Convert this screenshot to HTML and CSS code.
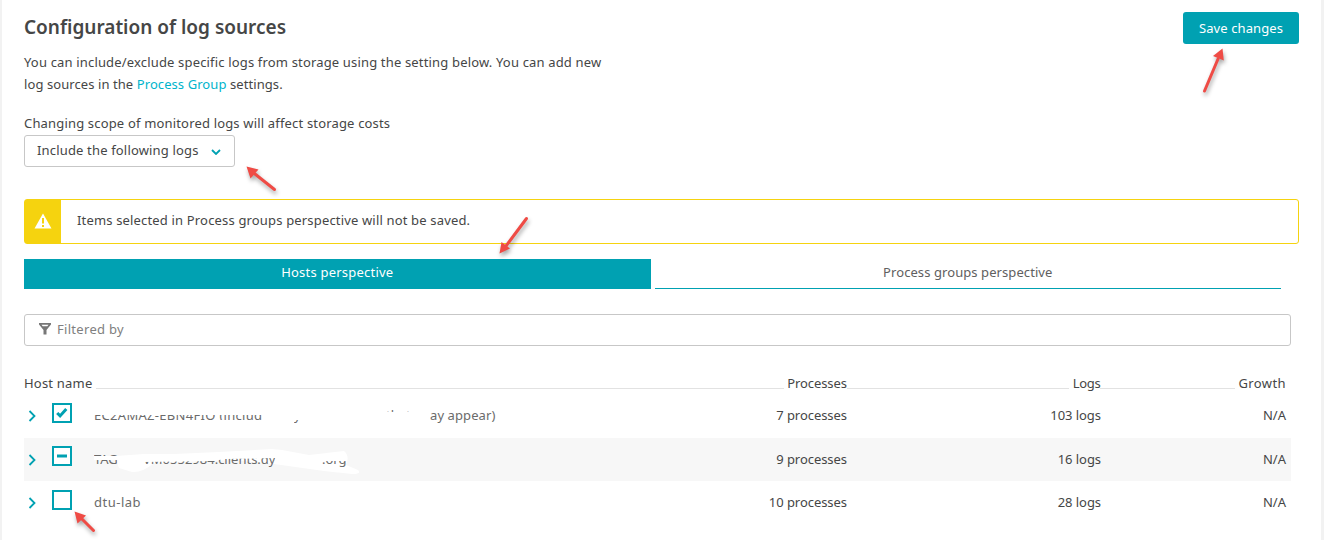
FILE: index.html
```html
<!DOCTYPE html>
<html lang="en">
<head>
<meta charset="utf-8">
<title>Configuration of log sources</title>
<link rel="stylesheet" href="styles.css">
</head>
<body>
<main class="page">
  <header class="header">
    <h1 class="title"><span class="t-title">Configuration of log sources</span></h1>
    <button class="save"><span class="t-save">Save changes</span></button>
  </header>
  <p class="intro"><span class="t-intro1">You can include/exclude specific logs from storage using the setting below. You can add new</span><br><span class="t-intro2">log sources in the <a class="link">Process Group</a> settings.</span></p>
  <label class="scope"><span class="t-scope">Changing scope of monitored logs will affect storage costs</span></label>
  <div class="select"><span class="t-select">Include the following logs</span>
    <svg class="caret" width="10" height="6" viewBox="0 0 10 6"><path d="M1 1l4 4 4-4"/></svg>
  </div>
  <div class="alert">
    <div class="alert-icon"><svg width="18" height="16" viewBox="0 0 18 16"><path fill="#fff" d="M9 .5 17.500 15.500H.5z"/><path fill="#f5d30f" d="M8 5h2v5.500H8zM8 12h2v2H8z"/></svg></div>
    <div class="alert-text"><span class="t-alert">Items selected in Process groups perspective will not be saved.</span></div>
  </div>
  <nav class="tabs">
    <div class="tab active"><span class="t-hosts">Hosts perspective</span></div>
    <div class="tab"><span class="t-groups">Process groups perspective</span></div>
  </nav>
  <div class="filter">
    <svg width="12" height="12" viewBox="0 0 12 12"><path fill="#777" fill-rule="evenodd" d="M0 0h12v1.500L7.500 7v4.500H4.500V7L0 1.500zM2.500 1.800l1.200 1.500h4.600l1.200-1.500z"/></svg>
    <span class="t-filter">Filtered by</span>
  </div>
  <section class="table">
    <div class="thead">
      <span class="t-hostname">Host name</span><i class="rule rule-host"></i>
      <span class="t-proc">Processes</span><i class="rule rule-proc"></i>
      <span class="t-logs">Logs</span><i class="rule rule-logs"></i>
      <span class="t-growth">Growth</span>
    </div>
    <div class="row">
      <svg class="chev" width="8" height="12" viewBox="0 0 8 12"><path d="M1.500 1 6.500 6l-5 5"/></svg>
      <div class="box"><svg width="16" height="16" viewBox="0 0 16 16"><path class="tick" d="M3.200 8l2.900 2.900L12.300 4"/></svg></div>
      <div class="name"><span class="frag f1">EC2AMAZ-EBN4FIO (includ</span><span class="frag f2">y</span><span class="frag f3">that</span><span class="frag f5">ay appear)</span></div>
      <div class="c-proc"><span>7 processes</span></div><div class="c-logs"><span>103 logs</span></div><div class="c-growth"><span>N/A</span></div>
    </div>
    <div class="row striped">
      <svg class="chev" width="8" height="12" viewBox="0 0 8 12"><path d="M1.500 1 6.500 6l-5 5"/></svg>
      <div class="box"><svg width="16" height="16" viewBox="0 0 16 16"><path class="dash" d="M3 8h10"/></svg></div>
      <div class="name">
        <svg class="smudge" width="268" height="40" viewBox="0 0 268 40"><path fill="#fff" d="M0 18H22L50 16 80 16Q130 14 178 11L188 12 215 17 250 13Q256 18 252 27L264 32Q268 36 258 36L230 33 180 26 140 22 60 25Q48 35 38 34L25 30 22 22 0 22z"/></svg>
        <span class="frag g1">TAG</span><span class="frag g2">VM0552984.clients.dy</span><span class="frag g3">.org</span></div>
      <div class="c-proc"><span>9 processes</span></div><div class="c-logs"><span>16 logs</span></div><div class="c-growth"><span>N/A</span></div>
    </div>
    <div class="row">
      <svg class="chev" width="8" height="12" viewBox="0 0 8 12"><path d="M1.500 1 6.500 6l-5 5"/></svg>
      <div class="box"></div>
      <div class="name"><span class="t-lab">dtu-lab</span></div>
      <div class="c-proc"><span>10 processes</span></div><div class="c-logs"><span>28 logs</span></div><div class="c-growth"><span>N/A</span></div>
    </div>
  </section>
</main>
<svg class="arrows" width="1324" height="540" viewBox="0 0 1324 540">
  <g><path d="M1204.500 91 1218 59"/><polygon points="1222.500,48.500 1213,56 1223.800,60.500"/></g>
  <g><path d="M274.500 189.500 255 174"/><polygon points="246.500,166.500 250.500,178.500 258.500,169.500"/></g>
  <g><path d="M526.500 218.500 506 246"/><polygon points="499.500,253.500 501.500,242 510,248.500"/></g>
  <g><path d="M93.500 530.500 82 519"/><polygon points="74.500,511.500 77.500,523.500 86,515.500"/></g>
</svg>
</body>
</html>
```
FILE: styles.css
```css
* { box-sizing: border-box; }
body { margin: 0; background: #f2f2f2; font: 13px/22px "Noto Sans", "Open Sans", sans-serif; color: #454646; }
.page { width: 1319px; height: 540px; margin-left: 2px; padding: 12px 22px 0; background: #fff; overflow: hidden; }
span { white-space: nowrap; }
.header { display: flex; justify-content: space-between; height: 39px; }
.title { margin: 0; font-size: 19px; line-height: 30px; font-weight: 600; }
.save { width: 116px; height: 32px; padding: 0; border: 0; border-radius: 3px; background: #00a1b2; color: #fff; font: 13px/32px "Noto Sans", sans-serif; }
.t-save { letter-spacing: .1px; }
.t-intro1, .t-alert, .t-select { letter-spacing: .165px; }
.t-intro2 { letter-spacing: .08px; }
.t-scope { letter-spacing: .17px; }
.t-hosts { letter-spacing: .22px; }
.t-groups { letter-spacing: .08px; }
.t-filter { letter-spacing: .3px; }
.t-hostname { letter-spacing: .2px; }
.t-proc { letter-spacing: -.1px; }
.t-logs { letter-spacing: -.3px; }
.t-growth { letter-spacing: .4px; }
.t-lab { letter-spacing: .5px; }
.intro { margin: 0; height: 61px; }
.link { color: #00b4cc; }
.scope { display: block; height: 23px; }
.select { display: flex; align-items: center; justify-content: space-between; width: 211px; height: 32px; padding: 0 13px 2px 12px; border: 1px solid #c7c7c7; border-radius: 3px; }
.caret { margin-top: 3px; }
.caret path, .chev path { fill: none; stroke: #00a1b2; stroke-width: 1.800; }
.alert { display: flex; width: 1275px; height: 45px; margin-top: 32px; border: 1px solid #f5d30f; border-radius: 3px; }
.alert-icon { display: flex; align-items: center; justify-content: center; width: 36px; padding-bottom: 2px; background: #f5d30f; }
.alert-text { padding: 9px 0 0 16px; }
.tabs { display: flex; gap: 4px; height: 30px; margin-top: 15px; width: 1257px; text-align: center; line-height: 26px; }
.tab { flex: 1; border-bottom: 1px solid #00a1b2; color: #606060; }
.tab.active { background: #00a1b2; color: #fff; }
.filter { display: flex; align-items: center; gap: 6px; width: 1267px; height: 32px; margin-top: 25px; padding: 0 14px 2px; border: 1px solid #c7c7c7; border-radius: 3px; color: #808080; }
.table { width: 1267px; margin-top: 26px; }
.thead { display: flex; height: 22px; padding-right: 5px; }
.rule { height: 1px; margin-top: 16px; background: #e2e2e2; }
.rule-host { flex: 1; margin: 16px 3px 0 4px; }
.rule-proc { width: 222px; margin-right: 4px; }
.rule-logs { width: 135px; margin-right: 3px; }
.row { display: grid; grid-template-columns: 28px 42px 550px 203px 254px 185px; height: 44px; line-height: 42px; }
.row.striped { height: 43px; background: #f7f7f7; }
.chev { margin: 16px 0 0 4px; }
.box { width: 20px; height: 20px; margin-top: 9px; border: 2px solid #00a1b2; background: #fff; line-height: 0; }
.striped .box { margin-top: 8px; }
.tick { fill: none; stroke: #00a1b2; stroke-width: 3; }
.dash { stroke: #00a1b2; stroke-width: 3; }
.name { position: relative; color: #6b6b6b; }
.c-proc, .c-logs, .c-growth { text-align: right; }
.c-proc, .c-logs { letter-spacing: -.05px; }
.frag { position: absolute; top: 0; }
.f1 { left: 0; letter-spacing: .3px; clip-path: inset(21px 0 16px 0); }
.f2 { left: 200px; clip-path: inset(26px 0 0 0); }
.f3 { left: 292px; clip-path: inset(14px 0 24px 0); }
.f5 { left: 336px; letter-spacing: .1px; }
.g1 { left: 0; clip-path: polygon(0 0, 100% 0, 100% 18px, 0 18px, 0 22px, 100% 22px, 100% 100%, 0 100%); }
.g2 { left: 49px; clip-path: polygon(0 24px, 70px 23px, 82px 21px, 100% 20px, 100% 100%, 0 100%); }
.g3 { left: 228px; clip-path: inset(23px 0 0 0); }
.smudge { position: absolute; left: 0; top: 0; }
.arrows { position: absolute; left: 0; top: 0; pointer-events: none; filter: drop-shadow(1px 3px 2px rgba(0,0,0,.35)); }
.arrows path { stroke: #ef4b45; stroke-width: 3; stroke-linecap: round; }
.arrows polygon { fill: #ef4b45; }
```
